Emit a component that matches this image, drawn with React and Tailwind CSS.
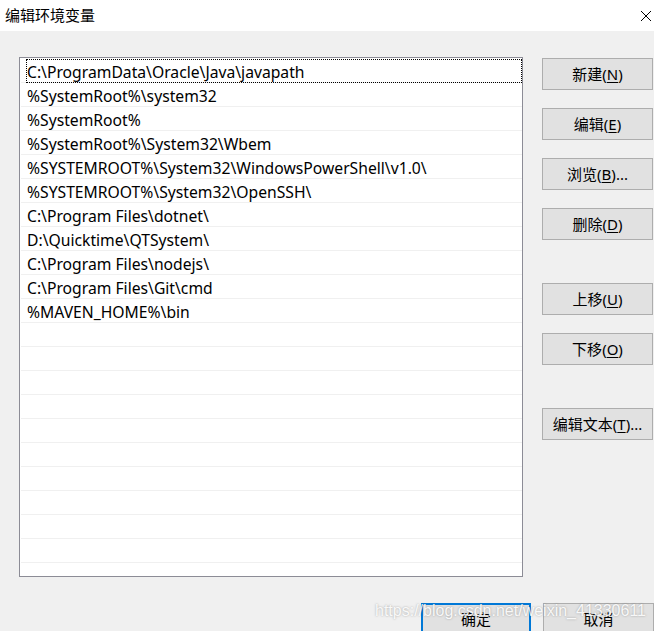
import React from "react";

const paths = [
  "C:\\ProgramData\\Oracle\\Java\\javapath",
  "%SystemRoot%\\system32",
  "%SystemRoot%",
  "%SystemRoot%\\System32\\Wbem",
  "%SYSTEMROOT%\\System32\\WindowsPowerShell\\v1.0\\",
  "%SYSTEMROOT%\\System32\\OpenSSH\\",
  "C:\\Program Files\\dotnet\\",
  "D:\\Quicktime\\QTSystem\\",
  "C:\\Program Files\\nodejs\\",
  "C:\\Program Files\\Git\\cmd",
  "%MAVEN_HOME%\\bin",
];

const rows = [...paths, ...Array(11).fill("")];

const FONT = { fontFamily: '"Noto Sans", "Noto Sans CJK SC", sans-serif' };

function Btn({ label, mn, suffix = "", className = "" }) {
  return (
    <div
      className={`h-[32px] w-[111px] border border-[#adadad] bg-[#e1e1e1] flex items-center justify-center text-[15px] text-black leading-none ${className}`}
    >
      <span>
        {label}(<span className="underline underline-offset-2">{mn}</span>){suffix}
      </span>
    </div>
  );
}

export default function App() {
  return (
    <div
      className="relative w-[654px] h-[631px] overflow-hidden bg-[#f0f0f0] text-black"
      style={FONT}
    >
      {/* title bar */}
      <div className="h-[31px] bg-white flex items-center justify-between pl-[5px] pr-[1px]">
        <span className="text-[15px] leading-none">编辑环境变量</span>
        <svg width="12" height="12" viewBox="0 0 12 12" className="mr-[1px]">
          <path d="M1 1 L11 11 M11 1 L1 11" stroke="#000" strokeWidth="1" fill="none" />
        </svg>
      </div>

      <div className="flex pl-[19px] pt-[26px]">
        {/* list */}
        <div className="w-[504px] h-[520px] border border-[#8c8c96] bg-white pt-[1px] overflow-hidden">
          {rows.map((r, i) => (
            <div
              key={i}
              className="relative h-[24px] ml-[1px] border-b border-[#f0f0f0] flex items-center pl-[6px] pt-[5px] text-[15.7px] leading-none whitespace-nowrap"
            >
              {i === 0 && (
                <div className="absolute left-[5px] right-0 top-0 bottom-[-1px] border border-dotted border-black" />
              )}
              <span className="relative">{r}</span>
            </div>
          ))}
        </div>

        {/* buttons */}
        <div className="ml-[19px] pt-[1px] flex flex-col">
          <Btn label="新建" mn="N" />
          <Btn label="编辑" mn="E" className="mt-[18px]" />
          <Btn label="浏览" mn="B" suffix="..." className="mt-[18px]" />
          <Btn label="删除" mn="D" className="mt-[18px]" />
          <Btn label="上移" mn="U" className="mt-[43px]" />
          <Btn label="下移" mn="O" className="mt-[18px]" />
          <Btn label="编辑文本" mn="T" suffix="..." className="mt-[43px]" />
        </div>
      </div>

      {/* bottom buttons */}
      <div className="flex pl-[421px] pt-[26px] gap-[12px]">
        <div className="h-[32px] w-[110px] border-2 border-[#0078d7] bg-[#e1e1e1] flex items-center justify-center text-[15px] leading-none">
          确定
        </div>
        <div className="h-[32px] w-[111px] border border-[#adadad] bg-[#e1e1e1] flex items-center justify-center text-[15px] leading-none">
          取消
        </div>
      </div>

      {/* watermark */}
      <div
        className="absolute left-[375px] top-[603px] text-[16px] leading-none text-white/90 whitespace-nowrap pointer-events-none"
        style={{
          fontFamily: '"Liberation Sans", Arial, sans-serif',
          textShadow: "0 0 2px rgba(90,90,90,0.55)",
        }}
      >
        https://blog.csdn.net/weixin_41330611
      </div>
    </div>
  );
}
